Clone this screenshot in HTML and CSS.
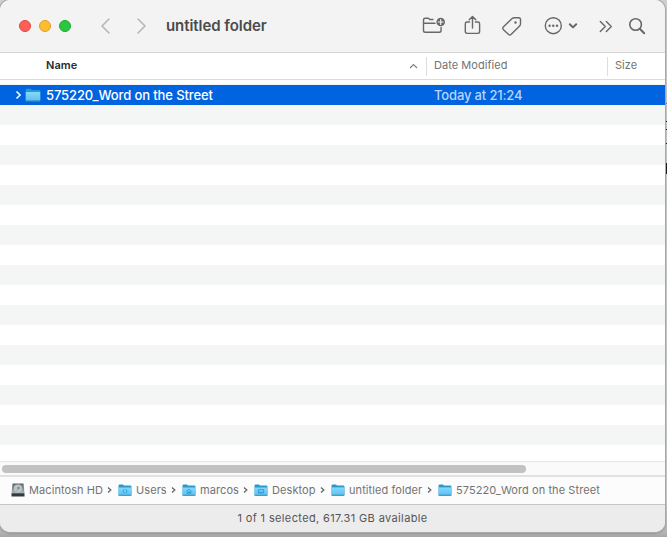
FILE: index.html
```html
<!DOCTYPE html>
<html lang="en">
<head>
<meta charset="utf-8">
<title>untitled folder</title>
<link rel="stylesheet" href="styles.css">
</head>
<body>
<svg class="defs" aria-hidden="true">
  <defs>
    <linearGradient id="blue" x2="0" y2="1"><stop stop-color="#85d9fc"/><stop offset="1" stop-color="#5dc1f3"/></linearGradient>
    <linearGradient id="metal" x2="0" y2="1"><stop stop-color="#59656a"/><stop offset=".7" stop-color="#a7b1b4"/><stop offset=".8" stop-color="#343b3f"/></linearGradient>
    <symbol id="folder" viewBox="0 0 16 14">
      <path d="M.6 2.200Q.6.7 2 .7h3.600l1.300 1.200H14q1.400 0 1.400 1.400v9.500q0 .7-.7.7H1.300q-.7 0-.7-.7z" fill="#2b98cc"/>
      <path d="M.8 4h14.400v8.600H.8z" fill="url(#blue)"/>
      <path d="M.8 13h14.400" stroke="#47849e" stroke-width=".8"/>
    </symbol>
    <symbol id="chevron" viewBox="0 0 5 8"><path d="M1 1.400 3.800 4 1 6.600" fill="none" stroke="currentColor" stroke-width="1.300"/></symbol>
  </defs>
</svg>
<div class="backdrop"><i></i><i></i><i></i><i></i><i></i></div>
<main class="window">
  <header class="toolbar">
    <div class="lights"><i class="close"></i><i class="minimize"></i><i class="expand"></i></div>
    <svg class="nav" width="60" height="20" viewBox="0 0 60 20"><path d="M16 3 9 10l7 7M45 3l7 7-7 7"/></svg>
    <h1>untitled folder</h1>
    <svg class="tools" width="240" height="30" viewBox="415 11 240 30">
      <path d="M433 19.500h-3.200l-1.400-1.300h-3.200q-1.700 0-1.700 1.700v10.600q0 1.800 1.800 1.800h14q1.800 0 1.800-1.800v-3M423.500 23.200H435"/>
      <circle cx="440.700" cy="22" r="4.300" class="solid"/>
      <path class="plus" d="M438.200 22h5M440.700 19.500v5"/>
      <path d="M469.500 22H467q-1.700 0-1.700 1.700v7.900q0 1.800 1.800 1.800h10.700q1.800 0 1.800-1.800v-7.900q0-1.700-1.700-1.700h-2.500M472.500 28V16.700M469.200 19.700l3.300-3.300 3.300 3.300"/>
      <path d="m503.300 27.100 8.800-8.600q1-.8 2.300-.8h4.300q1.800 0 1.800 1.800v4.200q0 1.300-.9 2.200l-8.600 8.600q-1.200 1.200-2.400 0l-5.300-5.100q-1.200-1.200 0-2.300z"/>
      <circle cx="515.500" cy="22.500" r="1.200" class="solid"/>
      <circle cx="553.300" cy="25.700" r="8"/>
      <g class="solid"><circle cx="549.600" cy="25.700" r="1.200"/><circle cx="553.300" cy="25.700" r="1.200"/><circle cx="557" cy="25.700" r="1.200"/></g>
      <path class="bold" d="m569.800 24.200 3.200 3.200 3.200-3.200"/>
      <path d="m600.300 21.500 5 5-5 5M606.300 21.500l5 5-5 5"/>
      <circle class="lens" cx="635.600" cy="24.500" r="5.800"/><path class="bold" d="m640 29 4.200 4.200"/>
    </svg>
  </header>
  <div class="columns">
    <div class="name"><b>Name</b><svg width="9" height="6" viewBox="0 0 9 6"><path d="m1 5 3.500-3.500L8 5"/></svg></div>
    <div class="date"><span>Date Modified</span></div>
    <div class="size"><span>Size</span></div>
  </div>
  <section class="list">
    <div class="row">
      <svg class="arrow" width="7" height="10" viewBox="0 0 7 10"><path d="m1.500 1.500 3.600 3.500-3.600 3.500"/></svg>
      <svg class="icon" width="16" height="14"><use href="#folder"/></svg>
      <span class="file">575220_Word on the Street</span>
      <span class="when">Today at 21:24</span>
    </div>
  </section>
  <div class="scroll"><div class="thumb"></div></div>
  <nav class="path">
    <div><svg class="icon" viewBox="0 0 14 14"><path d="M1.500.5h11L13.500 10v3.500H.5V10z" fill="url(#metal)"/><ellipse cx="7" cy="5.500" rx="4.200" ry="4" fill="#bac5c9"/><circle cx="7.400" cy="5" r="1.300" fill="#7f8b91"/><path d="M7 6.500 5 8.500" stroke="#8a959a" stroke-width=".8"/></svg><span>Macintosh HD</span><svg class="sep"><use href="#chevron"/></svg></div>
    <div><svg class="icon" viewBox="0 0 16 14"><use href="#folder"/><path d="M7 6q-2.500 2 0 5M9 6q2.500 2 0 5" class="mark"/></svg><span>Users</span><svg class="sep"><use href="#chevron"/></svg></div>
    <div><svg class="icon" viewBox="0 0 16 14"><use href="#folder"/><path d="m5 8.500 3-2.500 3 2.500M6 8.500V11h1.500V9h1v2H10V8.500" class="mark"/></svg><span>marcos</span><svg class="sep"><use href="#chevron"/></svg></div>
    <div><svg class="icon" viewBox="0 0 16 14"><use href="#folder"/><path d="M5 6.500h6v4H5zM5 9.500h6" class="mark"/></svg><span>Desktop</span><svg class="sep"><use href="#chevron"/></svg></div>
    <div><svg class="icon"><use href="#folder"/></svg><span>untitled folder</span><svg class="sep"><use href="#chevron"/></svg></div>
    <div><svg class="icon"><use href="#folder"/></svg><span class="last">575220_Word on the Street</span></div>
  </nav>
  <footer>1 of 1 selected, 617.31 GB available</footer>
</main>
</body>
</html>
```
FILE: styles.css
```css
* { box-sizing: border-box; }
body { margin: 0; width: 667px; height: 537px; overflow: hidden; position: relative; font: 11px/14px Inter, "Liberation Sans", sans-serif; background: linear-gradient(#d0d0d0 0 500px, #b4b4b4 533px, #a5a5a5); color: #737373; }
.defs { position: absolute; width: 0; height: 0; }
.backdrop { position: absolute; right: 0; top: 103px; width: 2px; height: 90px; }
.backdrop i { position: absolute; width: 2px; height: 1px; background: #111; }
.backdrop i:nth-child(1) { top: 0; background: #777; }
.backdrop i:nth-child(2) { top: 18px; }
.backdrop i:nth-child(3) { top: 26px; }
.backdrop i:nth-child(4) { top: 40px; }
.backdrop i:nth-child(5) { top: 60px; height: 11px; }
.window { position: relative; width: 665px; height: 532px; border-radius: 10px; overflow: hidden; background: #fff; box-shadow: 0 0 0 1px #a8a8a8, 0 1px 3px #777; display: flex; flex-direction: column; }
.toolbar { height: 53px; flex: none; border-bottom: 1px solid #d5d5d5; background: #f3f3f3; display: flex; align-items: center; }
.lights { display: flex; gap: 8px; margin-left: 19px; }
.lights i { width: 12px; height: 12px; border-radius: 50%; background: #ff5f57; border: 1px solid #e2463f; }
.lights .minimize { background: #febc2e; border-color: #dfa023; }
.lights .expand { background: #28c840; border-color: #1aab29; }
.nav { margin-left: 22px; fill: none; stroke: #b5b5b5; stroke-width: 1.5; stroke-linecap: round; stroke-linejoin: round; }
h1 { margin: 0 0 0 13px; width: 249px; font-size: 15px; line-height: 20px; font-weight: 600; letter-spacing: -.06px; color: #4b4b4b; white-space: nowrap; }
.tools { fill: none; stroke: #686868; stroke-width: 1.4; stroke-linecap: round; stroke-linejoin: round; }
.tools .solid { fill: #686868; stroke: none; }
.tools .plus { stroke: #f3f3f3; stroke-width: 1.2; }
.tools .bold { stroke-width: 2; }
.tools .lens { stroke-width: 1.6; }
.columns { height: 27px; flex: none; display: grid; grid-template-columns: 426px 181px 1fr; align-items: center; border-bottom: 1px solid #dcdcdc; }
.columns > div { height: 19px; display: flex; align-items: center; padding: 0 0 2px 7px; }
.columns .name { padding: 0 8px 2px 46px; justify-content: space-between; }
.columns svg { fill: none; stroke: #7d7d7d; stroke-width: 1.1; position: relative; top: 1px; }
.columns .date, .columns .size { border-left: 1px solid #dedede; }
.columns b { font-weight: 600; color: #2b2b2b; letter-spacing: .05px; }
.columns .date span { letter-spacing: .04px; }
.list { flex: none; height: 381px; padding-top: 5px; background: repeating-linear-gradient(#fff 0 20px, #f4f5f5 20px 40px) 0 5px; }
.row { height: 20px; display: flex; align-items: center; background: #0064e1; color: #fff; padding-left: 15px; font-size: 13px; line-height: 20px; font-weight: 500; white-space: nowrap; }
.arrow { fill: none; stroke: #fff; stroke-width: 1.6; }
.row .icon { margin: 0 5px 0 3px; }
.file { width: 388px; letter-spacing: -.11px; }
.when { color: #b5d5fa; letter-spacing: -.15px; }
.scroll { flex: none; height: 16px; background: #fafafa; border-top: 1px solid #e5e5e5; border-bottom: 2px solid #e2e2e2; padding: 3px 2px; }
.thumb { width: 524px; height: 8px; border-radius: 4px; background: #c2c2c2; }
.path { flex: none; height: 28px; padding: 0 0 1px 11px; display: grid; grid-template-columns: 107px 64px 72px 77px 107px 1fr; align-items: center; border-bottom: 1px solid #c6c6c6; background: #fcfcfc; white-space: nowrap; letter-spacing: .08px; }
.path div { display: flex; align-items: center; }
.path .icon { width: 14px; height: 14px; margin-right: 4px; }
.path .mark { fill: none; stroke: #2c9cd0; }
.path .sep { width: 5px; height: 8px; margin: 0 6px 0 auto; color: #666; }
footer { flex: 1; display: flex; align-items: center; justify-content: center; padding-bottom: 2px; background: #ececed; color: #555; letter-spacing: .37px; }
```
